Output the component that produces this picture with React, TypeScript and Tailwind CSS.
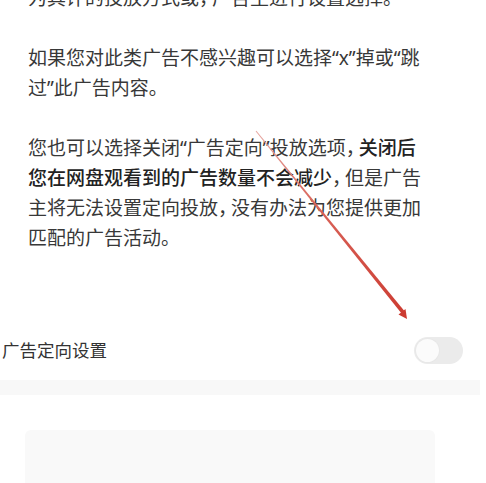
function Comma() {
  return <span className="tracking-[-6px]">，</span>;
}

export default function App() {
  return (
    <div className="relative h-[483px] w-[486px] overflow-hidden bg-white font-['Noto_Sans','Noto_Sans_CJK_SC',sans-serif]">
      {/* Explanation text */}
      <div className="-mt-[17px] whitespace-nowrap pl-[28px] text-[19px] leading-[30px] text-[#383838]">
        <p>
          为其评的投放方式或
          <Comma />
          广告主进行设置选择。
        </p>
        <p className="mt-[30px]">
          如果您对此类广告不感兴趣可以选择“x”掉或“跳
          <br />
          过”此广告内容。
        </p>
        <p className="mt-[30px]">
          您也可以选择关闭“广告定向”投放选项
          <Comma />
          <span className="font-medium text-[#222]">关闭后</span>
          <br />
          <span className="font-medium text-[#222]">您在网盘观看到的广告数量不会减少</span>
          <Comma />
          但是广告
          <br />
          主将无法设置定向投放
          <Comma />
          没有办法为您提供更加
          <br />
          匹配的广告活动。
        </p>
      </div>

      {/* Setting row */}
      <div className="mt-[72px] flex h-[50px] items-center justify-between pl-[2px] pr-[23px]">
        <span className="text-[17.5px] text-[#333]">广告定向设置</span>
        <div className="flex h-[27px] w-[49px] items-center rounded-full bg-[#ebebeb] px-[2px]">
          <div className="h-[23px] w-[23px] rounded-full bg-[#fbfbfb] shadow-[0_0_2px_rgba(0,0,0,0.06)]" />
        </div>
      </div>

      <div className="mt-[5px] h-[15px] w-[480px] bg-[#f8f8f8]" />

      <div className="ml-[25px] mt-[35px] h-[100px] w-[410px] rounded-md bg-[#f9f9f9]" />

      {/* Red annotation arrow */}
      <svg className="pointer-events-none absolute left-0 top-0" width="486" height="483" viewBox="0 0 486 483">
        <defs>
          <linearGradient id="arrowGrad" x1="256" y1="131" x2="406" y2="318" gradientUnits="userSpaceOnUse">
            <stop offset="0" stopColor="#e6a8a2" />
            <stop offset="0.4" stopColor="#d9645a" />
            <stop offset="1" stopColor="#cc3b31" />
          </linearGradient>
        </defs>
        <polygon points="255.6,131.3 256.4,130.7 404.6,311.2 401.6,313.6" fill="url(#arrowGrad)" />
        <polygon points="407,319 398.5,314.5 405.5,309" fill="#cc3b31" />
      </svg>
    </div>
  );
}
